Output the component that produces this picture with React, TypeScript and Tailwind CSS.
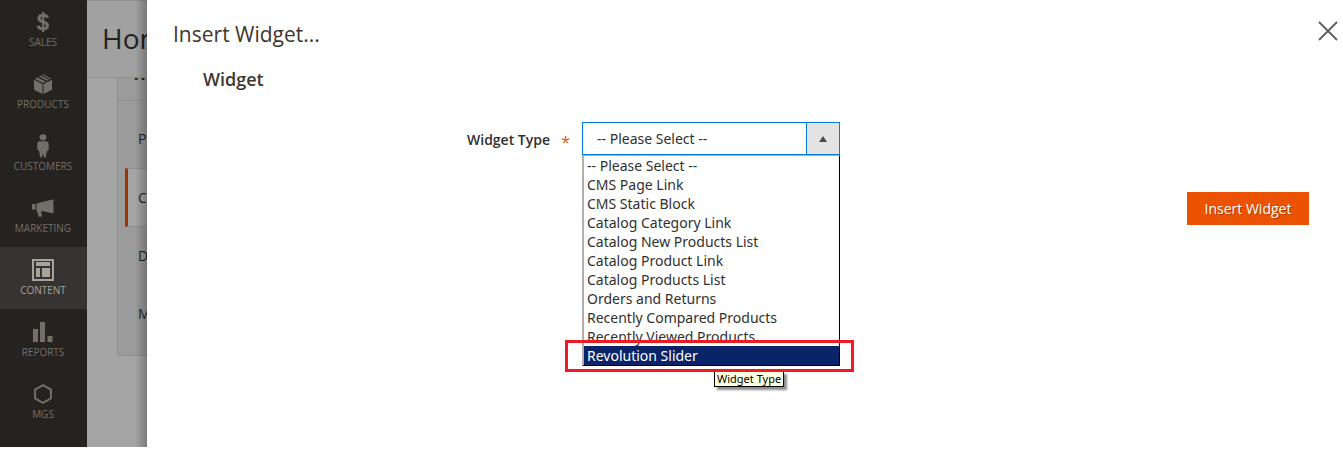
import { ReactNode } from "react";

type NavItem = { label: string; icon: ReactNode; active?: boolean };

const navItems: NavItem[] = [
  {
    label: "SALES",
    icon: (
      <svg width="14" height="22" viewBox="0 0 14 22" fill="none" stroke="currentColor" strokeWidth="3">
        <path d="M11.6 6.8C11.200 4.900 9.400 4.200 7.200 4.200 4.700 4.200 2.900 5.300 2.900 7.300c0 4.800 8.600 2.600 8.600 7.300 0 2.200-1.900 3.300-4.400 3.300-2.600 0-4.500-1.100-4.900-3.100" />
        <path d="M7.200 1v20" strokeWidth="2.200" />
      </svg>
    ),
  },
  {
    label: "PRODUCTS",
    icon: (
      <svg width="18" height="20" viewBox="0 0 18 20" fill="currentColor">
        <path d="M0 5.800l8.500 4.200V20L0 15.700zM18 5.800L9.500 10V20l8.500-4.300zM.8 4.700L3.300 3.400l8.300 4.100L9 8.900zM4.900 2.500L6.600 1.600l8.200 4.200-1.700.9zM8 .8L9.300.2l7.900 4.500-1.400.6z" />
      </svg>
    ),
  },
  {
    label: "CUSTOMERS",
    icon: (
      <svg width="12" height="24" viewBox="0 0 12 24" fill="currentColor">
        <ellipse cx="6" cy="3.300" rx="3.500" ry="3.100" />
        <path d="M3 7.300h6c1.700 0 2.700 1.200 2.700 3v5.200l-1.700 1.500L8.700 23.500H7.300L6 19.500l-1.300 4H3.300L2 17 .3 15.500v-5.200c0-1.800 1-3 2.700-3z" />
      </svg>
    ),
  },
  {
    label: "MARKETING",
    icon: (
      <svg width="22" height="18" viewBox="0 0 22 18" fill="currentColor">
        <path d="M0 5h3.500v5.500H0zM4.500 4.500L21.500.3v14.200L10 12l-.9.400 1 5.100-3.200.4-2.400-6.700z" />
      </svg>
    ),
  },
  {
    label: "CONTENT",
    active: true,
    icon: (
      <svg width="22" height="22" viewBox="0 0 22 22" fill="currentColor">
        <path fillRule="evenodd" d="M0 0h22v22H0zM2 2v18h18V2z" />
        <path d="M4 3h14v4H4zM4 9h4v9H4zM10 9h8v9h-8z" />
      </svg>
    ),
  },
  {
    label: "REPORTS",
    icon: (
      <svg width="20" height="20" viewBox="0 0 20 20" fill="currentColor">
        <path d="M0 7h5v13H0zM7 0h5v20H7zM14.500 14h5v6h-5z" />
      </svg>
    ),
  },
  {
    label: "MGS",
    icon: (
      <svg width="18" height="20" viewBox="0 0 18 20" fill="none" stroke="currentColor" strokeWidth="2">
        <path d="M9 1.200l7.900 4.400v8.800L9 18.800l-7.900-4.400V5.600z" />
      </svg>
    ),
  },
];

const tabs = ["Page Information", "Content", "Design", "Meta Data"];

const widgetTypes = [
  "-- Please Select --",
  "CMS Page Link",
  "CMS Static Block",
  "Catalog Category Link",
  "Catalog New Products List",
  "Catalog Product Link",
  "Catalog Products List",
  "Orders and Returns",
  "Recently Compared Products",
  "Recently Viewed Products",
  "Revolution Slider",
];

function Sidebar() {
  return (
    <nav aria-label="Main" className="w-[87px] shrink-0 overflow-hidden bg-[#26221f]">
      <ul className="-mt-px">
        {navItems.map((item) => (
          <li key={item.label}>
            <a
              href="#"
              className={
                item.active
                  ? "flex h-[62px] flex-col items-center bg-[#373330] pt-[11px] pr-px text-[#a8a39c]"
                  : "flex h-[62px] flex-col items-center pt-[11px] pr-px text-[#736e68]"
              }
            >
              <span className="flex h-6 items-center">{item.icon}</span>
              <span className="text-[10px] leading-4">{item.label}</span>
            </a>
          </li>
        ))}
      </ul>
    </nav>
  );
}

function PageBehind() {
  return (
    <div className="relative w-[60px] shrink-0 overflow-hidden bg-[#a5a5a5] text-[#24211f]">
      <header className="h-[78px] border-y border-[#929292] bg-[#a1a1a1] pl-[15px]">
        <h1 className="text-[28px] leading-[74px] whitespace-nowrap">Home Page</h1>
      </header>
      <div className="ml-[30px] h-[278px] w-60 border-b border-l border-[#8f8f8f] bg-[#9b9b9b]">
        <div className="h-[23px] overflow-hidden border-b border-[#8f8f8f] pl-3.5">
          <p className="-mt-4 text-base leading-6 font-semibold">Web Page</p>
        </div>
        <ul className="pt-[9px] pl-[7px]">
          {tabs.map((tab) => (
            <li key={tab}>
              <a
                href="#"
                className={
                  tab === "Content"
                    ? "block h-[59px] border-y border-l-3 border-y-[#8f8f8f] border-l-[#9b3400] bg-[#a5a5a5] pl-2.5 text-sm leading-[58px] whitespace-nowrap"
                    : "block h-[58px] pl-[13px] text-sm leading-[58px] whitespace-nowrap"
                }
              >
                {tab}
              </a>
            </li>
          ))}
        </ul>
      </div>
      <div className="absolute inset-y-0 right-0 w-3 bg-linear-to-r from-transparent to-black/25" />
    </div>
  );
}

function WidgetTypeField() {
  return (
    <div className="flex items-start pl-[320px] font-['Noto_Sans',sans-serif] text-sm">
      <div className="flex w-[115px] justify-between pt-2 pr-3">
        <label htmlFor="widget-type" className="font-['Open_Sans'] leading-5 font-semibold text-[#303030]">
          Widget Type
        </label>
        <span aria-hidden="true" className="font-['Open_Sans'] text-base leading-6 text-[#eb5202]">
          *
        </span>
      </div>
      <div className="relative w-[258px]">
        <select
          id="widget-type"
          defaultValue={widgetTypes[0]}
          className="h-[33px] w-full appearance-none border border-[#007bdb] bg-white pl-3.5 text-sm text-[#303030] outline-none"
        >
          {widgetTypes.map((type) => (
            <option key={type}>{type}</option>
          ))}
        </select>
        <span className="pointer-events-none absolute top-0 right-0 flex h-[33px] w-[34px] items-center justify-center border border-[#007bdb] bg-[#e3e3e3]">
          <svg width="8" height="6" viewBox="0 0 8 6" fill="#514943">
            <path d="M4 0l4 6H0z" />
          </svg>
        </span>
        <ul
          role="listbox"
          aria-label="Widget Type"
          className="absolute top-[33px] left-0 w-full border-t border-r border-b border-l-2 border-t-[#b0b0b0] border-r-black border-b-black border-l-[#b0b0b0] bg-white text-[#303030]"
        >
          {widgetTypes.map((type) => {
            const selected = type === "Revolution Slider";
            return (
              <li
                key={type}
                role="option"
                aria-selected={selected}
                className={selected ? "bg-[#0a246a] pl-[3px] leading-[19px] text-white" : "pl-[3px] leading-[19px]"}
              >
                {type}
              </li>
            );
          })}
        </ul>
        <div className="absolute top-[249px] left-[132px] border border-black bg-[#ffffe1] px-0.5 text-[11px] leading-[14px] whitespace-nowrap text-black shadow-[3px_3px_2px_rgba(0,0,0,0.45)]">
          Widget Type
        </div>
        <div className="pointer-events-none absolute top-[218px] -left-[17px] h-8 w-[289px] border-3 border-[#ed1c24]" />
      </div>
    </div>
  );
}

export default function App() {
  return (
    <div className="min-h-screen bg-white pb-0.5 font-['Open_Sans',sans-serif]">
      <div className="flex min-h-[447px]">
        <Sidebar />
        <PageBehind />
        <main role="dialog" aria-labelledby="dialog-title" className="min-w-0 flex-1 bg-white text-[#41362f]">
          <header className="flex items-start justify-between pt-5 pl-[26px]">
            <h2 id="dialog-title" className="text-[21px] leading-7">
              Insert Widget...
            </h2>
            <button type="button" aria-label="Close" className="mt-px mr-[5px] text-[#625b56]">
              <svg width="20" height="20" viewBox="0 0 20 20" stroke="currentColor" strokeWidth="1.800">
                <path d="M1 1l18 18M19 1L1 19" />
              </svg>
            </button>
          </header>
          <h3 className="mt-5 mb-8 pl-14 text-lg leading-[22px] font-semibold">Widget</h3>
          <WidgetTypeField />
          <div className="mt-[37px] flex justify-end pr-[34px]">
            <button
              type="button"
              className="h-[33px] w-[122px] bg-[#eb5202] text-sm font-medium text-white [text-shadow:1px_1px_0_rgba(0,0,0,0.25)]"
            >
              Insert Widget
            </button>
          </div>
        </main>
      </div>
    </div>
  );
}
